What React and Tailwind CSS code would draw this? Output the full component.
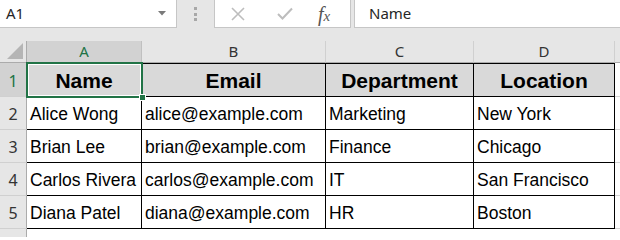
import React from 'react';

const cols = [
    { key: 'A', w: 'w-[115px]' },
    { key: 'B', w: 'w-[184px]' },
    { key: 'C', w: 'w-[148px]' },
    { key: 'D', w: 'w-[141px]' },
];

const header = ['Name', 'Email', 'Department', 'Location'];

const rows = [
    ['Alice Wong', 'alice@example.com', 'Marketing', 'New York'],
    ['Brian Lee', 'brian@example.com', 'Finance', 'Chicago'],
    ['Carlos Rivera', 'carlos@example.com', 'IT', 'San Francisco'],
    ['Diana Patel', 'diana@example.com', 'HR', 'Boston'],
];

const uiFont = { fontFamily: '"Noto Sans", "Open Sans", sans-serif' };
const cellFont = { fontFamily: '"Liberation Sans", Arial, sans-serif' };

const FormulaBar = () => (
    <div className="flex h-[28px] bg-[#e6e6e6]" style={uiFont}>
        <div className="w-[177px] h-full bg-white border-r border-b border-[#c6c6c6] flex items-center justify-between pl-[6px] pr-[10px]">
            <span className="text-[15px] text-[#262626]">A1</span>
            <svg width="8" height="5" viewBox="0 0 8 5"><path d="M0 0h8L4 4.5z" fill="#7a7a7a" /></svg>
        </div>
        <div className="w-[37px] flex flex-col items-center justify-center gap-[2.5px]">
            <span className="w-[3px] h-[3px] bg-[#a8a8a8]" />
            <span className="w-[3px] h-[3px] bg-[#a8a8a8]" />
            <span className="w-[3px] h-[3px] bg-[#a8a8a8]" />
        </div>
        <div className="w-[137px] h-full bg-white border-x border-b border-[#c6c6c6] flex items-center">
            <svg className="ml-[16px]" width="14" height="14" viewBox="0 0 14 14">
                <path d="M1 1L13 13M13 1L1 13" stroke="#bdbdbd" strokeWidth="1.6" />
            </svg>
            <svg className="ml-[32px]" width="16" height="13" viewBox="0 0 16 13">
                <path d="M1 7L5.5 11.5L15 1.5" stroke="#bdbdbd" strokeWidth="2" fill="none" />
            </svg>
            <span className="ml-[25px] text-[20px] leading-none italic text-[#555]" style={{ fontFamily: '"Liberation Serif", serif' }}>
                f<span className="text-[15px]">x</span>
            </span>
        </div>
        <div className="w-[3px]" />
        <div className="flex-1 h-full bg-white border-l border-b border-[#c6c6c6] flex items-center pl-[14px]">
            <span className="text-[15px] text-[#262626]">Name</span>
        </div>
    </div>
);

const ColumnHeaders = () => (
    <div className="flex h-[22px]" style={uiFont}>
        <div className="w-[27px] h-full border-r border-b border-[#ababab] relative">
            <svg className="absolute right-[3px] bottom-[3px]" width="16" height="16" viewBox="0 0 16 16">
                <path d="M16 0V16H0z" fill="#b5b5b5" />
            </svg>
        </div>
        {cols.map((c) => (
            <div
                key={c.key}
                className={`${c.w} h-full flex items-center justify-center border-r border-b text-[15px] ${c.key === 'A' ? 'bg-[#d2d2d2] text-[#217346] border-r-[#c0c0c0] border-b-[#ababab]' : 'border-r-[#d0d0d0] border-b-[#ababab] text-[#333]'}`}
            >
                {c.key}
            </div>
        ))}
        <div className="flex-1 h-full border-b border-[#ababab]" />
    </div>
);

const RowHeader = ({ n, selected, h }) => (
    <div
        className={`w-[27px] ${h} border-r border-r-[#ababab] border-b border-b-[#d0d0d0] flex items-end justify-center pb-[3px] text-[16px] ${selected ? 'bg-[#d2d2d2] text-[#217346]' : 'text-[#333]'}`}
        style={uiFont}
    >
        {n}
    </div>
);

const App = () => {
    return (
        <div className="w-[620px] h-[237px] overflow-hidden bg-[#e6e6e6] relative">
            <FormulaBar />
            <div className="h-[13px]" />
            <ColumnHeaders />

            {/* header row */}
            <div className="flex h-[34px]">
                <RowHeader n="1" selected h="h-[34px]" />
                {cols.map((c, i) => (
                    <div
                        key={c.key}
                        className={`${c.w} h-full bg-[#d9d9d9] border-r border-b border-t border-black flex items-center justify-center pt-[1px] text-[21px] font-bold text-black`}
                        style={cellFont}
                    >
                        {header[i]}
                    </div>
                ))}
                <div className="flex-1 h-full bg-white border-b border-[#d4d4d4]" />
            </div>

            {rows.map((r, ri) => (
                <div key={ri} className="flex h-[33px]">
                    <RowHeader n={ri + 2} h="h-[33px]" />
                    {cols.map((c, i) => (
                        <div
                            key={c.key}
                            className={`${c.w} h-full bg-white border-r border-b border-black flex items-end pl-[3px] pb-[6px] text-[17.5px] leading-none text-black whitespace-nowrap overflow-hidden`}
                            style={cellFont}
                        >
                            {r[i]}
                        </div>
                    ))}
                    <div className="flex-1 h-full bg-white border-b border-[#d4d4d4]" />
                </div>
            ))}

            <div className="flex h-[20px]">
                <div className="w-[27px] h-full border-r border-[#ababab]" />
                <div className="flex-1 h-full bg-white" />
            </div>

            {/* active cell A1 */}
            <div className="absolute left-[26px] top-[62px] w-[117px] h-[36px] border-2 border-[#217346] shadow-[inset_0_0_0_1px_#ffffff]" />
            <div className="absolute left-[139px] top-[94px] w-[7px] h-[7px] bg-[#217346] border border-white" />
        </div>
    );
};

export default App;
